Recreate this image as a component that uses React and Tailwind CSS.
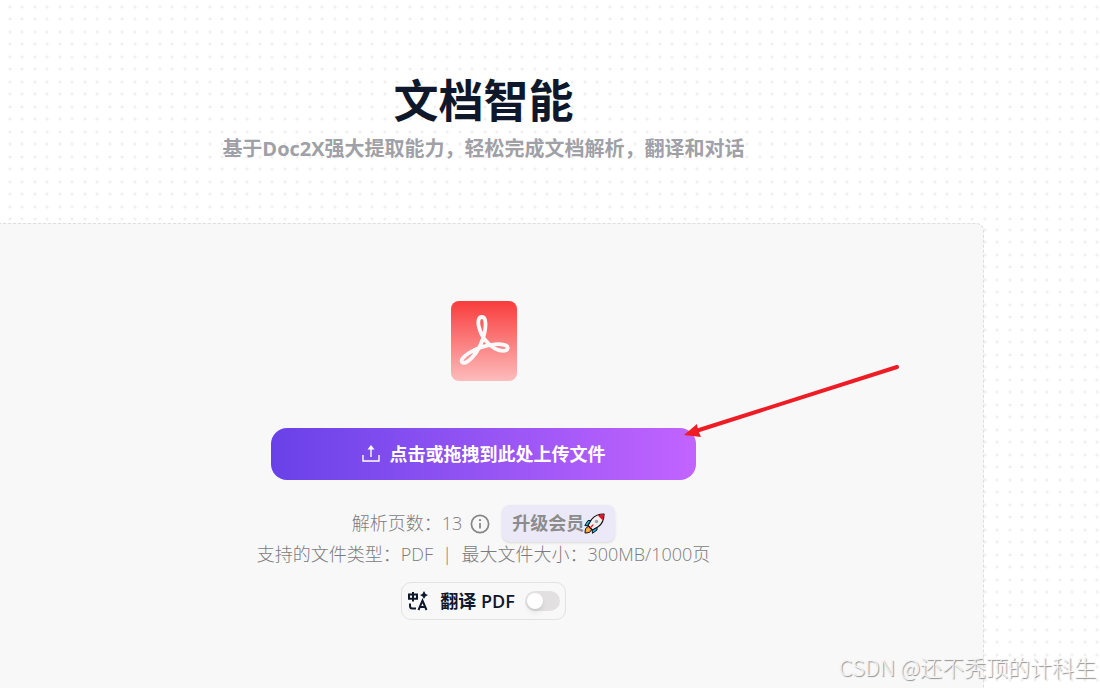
import { useState } from 'react';

const dots =
  'bg-[radial-gradient(circle_at_10px_7px,#f0f0f1_1px,transparent_2px),radial-gradient(circle_at_22px_7px,#f0f0f1_1px,transparent_2px),radial-gradient(circle_at_10px_19px,#f0f0f1_1px,transparent_2px),radial-gradient(circle_at_22px_19px,#f0f0f1_1px,transparent_2px)] bg-[size:25px_25px]';

function PdfIcon() {
  return (
    <svg className="h-20 w-[66px]" viewBox="0 0 66 80" fill="none" aria-hidden="true">
      <defs>
        <linearGradient id="pdf-fill" x1="0" y1="0" x2="0" y2="1">
          <stop stopColor="#f93c3c" />
          <stop offset="1" stopColor="#fdbcbc" />
        </linearGradient>
      </defs>
      <rect width="66" height="80" rx="8" fill="url(#pdf-fill)" />
      <path
        d="M31 16c-3.600 0-4.300 4.500-3.200 9.500 2 9.200 8.500 17.500 16.200 22.200 4.500 2.700 11.800 3 12.600-.2.900-3.500-6-4.700-12.600-4.200-9 .7-18.500 3.900-26 8.700-4.500 2.900-8.700 6.700-7 9 1.900 2.400 6.200-.3 9.700-4 6.300-6.700 11-16.500 12.900-25.500C35 25 35.300 16 31 16Z"
        stroke="#f9f9f9"
        strokeWidth="3.800"
        strokeLinejoin="round"
      />
    </svg>
  );
}

function UploadIcon() {
  return (
    <svg className="h-[18px] w-[18px]" viewBox="0 0 18 18" fill="none" stroke="currentColor" strokeWidth="1.400" aria-hidden="true">
      <path d="M1 10v6h16v-6M9 12V3" />
      <path d="M9 0 5.500 4.500h7Z" fill="currentColor" stroke="none" />
    </svg>
  );
}

function InfoIcon() {
  return (
    <svg className="h-5 w-5" viewBox="0 0 20 20" fill="none" stroke="currentColor" strokeWidth="1.700" aria-hidden="true">
      <circle cx="10" cy="10" r="8.600" />
      <path d="M10 9v5.500" />
      <circle cx="10" cy="6.200" r="1.100" fill="currentColor" stroke="none" />
    </svg>
  );
}

function RocketIcon() {
  return (
    <svg className="h-[21px] w-[21px]" viewBox="0 0 21 21" strokeLinejoin="round" aria-hidden="true">
      <path d="M7 7.500H4L.8 12.500l4.700.5ZM13 14v3L8.500 20.300 8 15.500Z" fill="#1fb5ea" stroke="#111" strokeWidth="1" />
      <path d="M4.500 13.500C1.500 14 1 17 1 20c3 0 6-.5 6.500-3.500Z" fill="#ff9b2f" stroke="#111" strokeWidth="1" />
      <path d="M4 16 2.500 18.500 5.500 17Z" fill="#ffe07a" />
      <path d="M20 1c-5.500 0-9.500 1.500-12.500 5.500L4 12.500 8.500 17l6-3.500C18.500 10.500 20 6.500 20 1Z" fill="#f1f1f1" stroke="#111" strokeWidth="1.200" />
      <path d="M19.500 1.500c-2 0-4 .2-5.700.9l4.800 4.800c.7-1.700.9-3.700.9-5.700Z" fill="#e81224" />
      <circle cx="12.500" cy="8.500" r="1.800" fill="#a6a6a6" />
      <path d="M9 12 6.500 14.500" stroke="#e81224" strokeWidth="1.200" strokeLinecap="round" />
    </svg>
  );
}

function TranslateIcon() {
  return (
    <svg className="h-5 w-5" viewBox="0 0 20 20" fill="none" stroke="currentColor" strokeWidth="2" aria-hidden="true">
      <path d="M1 3.500h8v4.200H1ZM5 1v9.500" />
      <path d="M2 12.500V15q0 2.500 2.500 2.500H8" />
      <path d="m10.500 19 4-9.500 4 9.500M12 16h5" />
      <path d="M16 0q.8 3.200 4 4-3.200.8-4 4-.8-3.200-4-4 3.200-.8 4-4Z" fill="currentColor" stroke="none" />
    </svg>
  );
}

function Arrow() {
  return (
    <svg
      className="pointer-events-none absolute -top-[64px] left-[413px] h-[76px] w-[216px]"
      viewBox="0 0 216 76"
      aria-hidden="true"
    >
      <path d="M12 67 213 3" stroke="#ee1c25" strokeWidth="4" strokeLinecap="round" />
      <path d="M0 71 13 60 14 66 17 73Z" fill="#ee1c25" />
    </svg>
  );
}

export default function App() {
  const [translate, setTranslate] = useState(false);

  return (
    <div className="relative flex min-h-screen flex-col overflow-hidden bg-white font-['Open_Sans','Noto_Sans_CJK_SC',sans-serif]">
      <header className={`h-[223px] pt-[74px] ${dots}`}>
        <div className="-ml-[17px] mr-[116px] text-center font-bold">
          <h1 className="text-[45px] leading-[54px] text-[#0f172a]">文档智能</h1>
          <p className="mt-2 text-[20px] leading-[26px] text-[#a0a0a7]">
            基于Doc2X强大提取能力，轻松完成文档解析，翻译和对话
          </p>
        </div>
      </header>

      <main className={`flex flex-1 flex-col ${dots}`}>
        <section className="-ml-[17px] mr-[116px] flex flex-1 flex-col items-center rounded-tr-lg border border-b-0 border-dashed border-[#dedede] bg-[#f8f8f8] pt-[77px] pb-[68px] text-[18px] text-[#858585]">
          <PdfIcon />

          <div className="relative mt-[47px]">
            <button
              type="button"
              className="flex h-[52px] w-[425px] items-center justify-center gap-2.5 rounded-2xl bg-linear-to-r from-[#6941e8] to-[#c263ff] font-bold text-white"
            >
              <UploadIcon />
              点击或拖拽到此处上传文件
            </button>
            <Arrow />
          </div>

          <div className="mt-[25px] flex h-[37px] items-center font-light">
            <span className="text-[#7c7c7c]">解析页数：13</span>
            <button type="button" aria-label="页数说明" className="ml-2">
              <InfoIcon />
            </button>
            <button
              type="button"
              className="ml-3 flex h-[37px] items-center rounded-lg bg-[#ebe8f7] px-2.5 font-bold text-[#8c8c8c] shadow-sm"
            >
              升级会员
              <RocketIcon />
            </button>
          </div>

          <p className="leading-[25px] font-light whitespace-pre text-[#7c7c7c]">支持的文件类型：PDF  |  最大文件大小：300MB/1000页</p>

          <label className="mt-[15px] flex h-[38px] cursor-pointer items-center rounded-[10px] border border-[#e2e2e4] pr-[5px] pl-1.5 font-semibold text-[#0f172a]">
            <TranslateIcon />
            <span className="ml-3">翻译 PDF</span>
            <input
              type="checkbox"
              role="switch"
              checked={translate}
              onChange={(e) => setTranslate(e.target.checked)}
              className="ml-2.5 h-5 w-[35px] appearance-none rounded-full bg-[#e2e0e1] p-0.5 before:block before:h-4 before:w-4 before:rounded-full before:bg-white before:shadow-md checked:bg-[#7c4af0] checked:before:translate-x-[15px]"
            />
          </label>
        </section>
      </main>

      <p className="absolute right-1 bottom-1.5 font-['Noto_Sans_CJK_SC',sans-serif] text-[22px] leading-8 font-light text-[#f4f4f4] [text-shadow:1px_1px_1px_#8c8c8c]">
        CSDN @还不秃顶的计科生
      </p>
    </div>
  );
}
